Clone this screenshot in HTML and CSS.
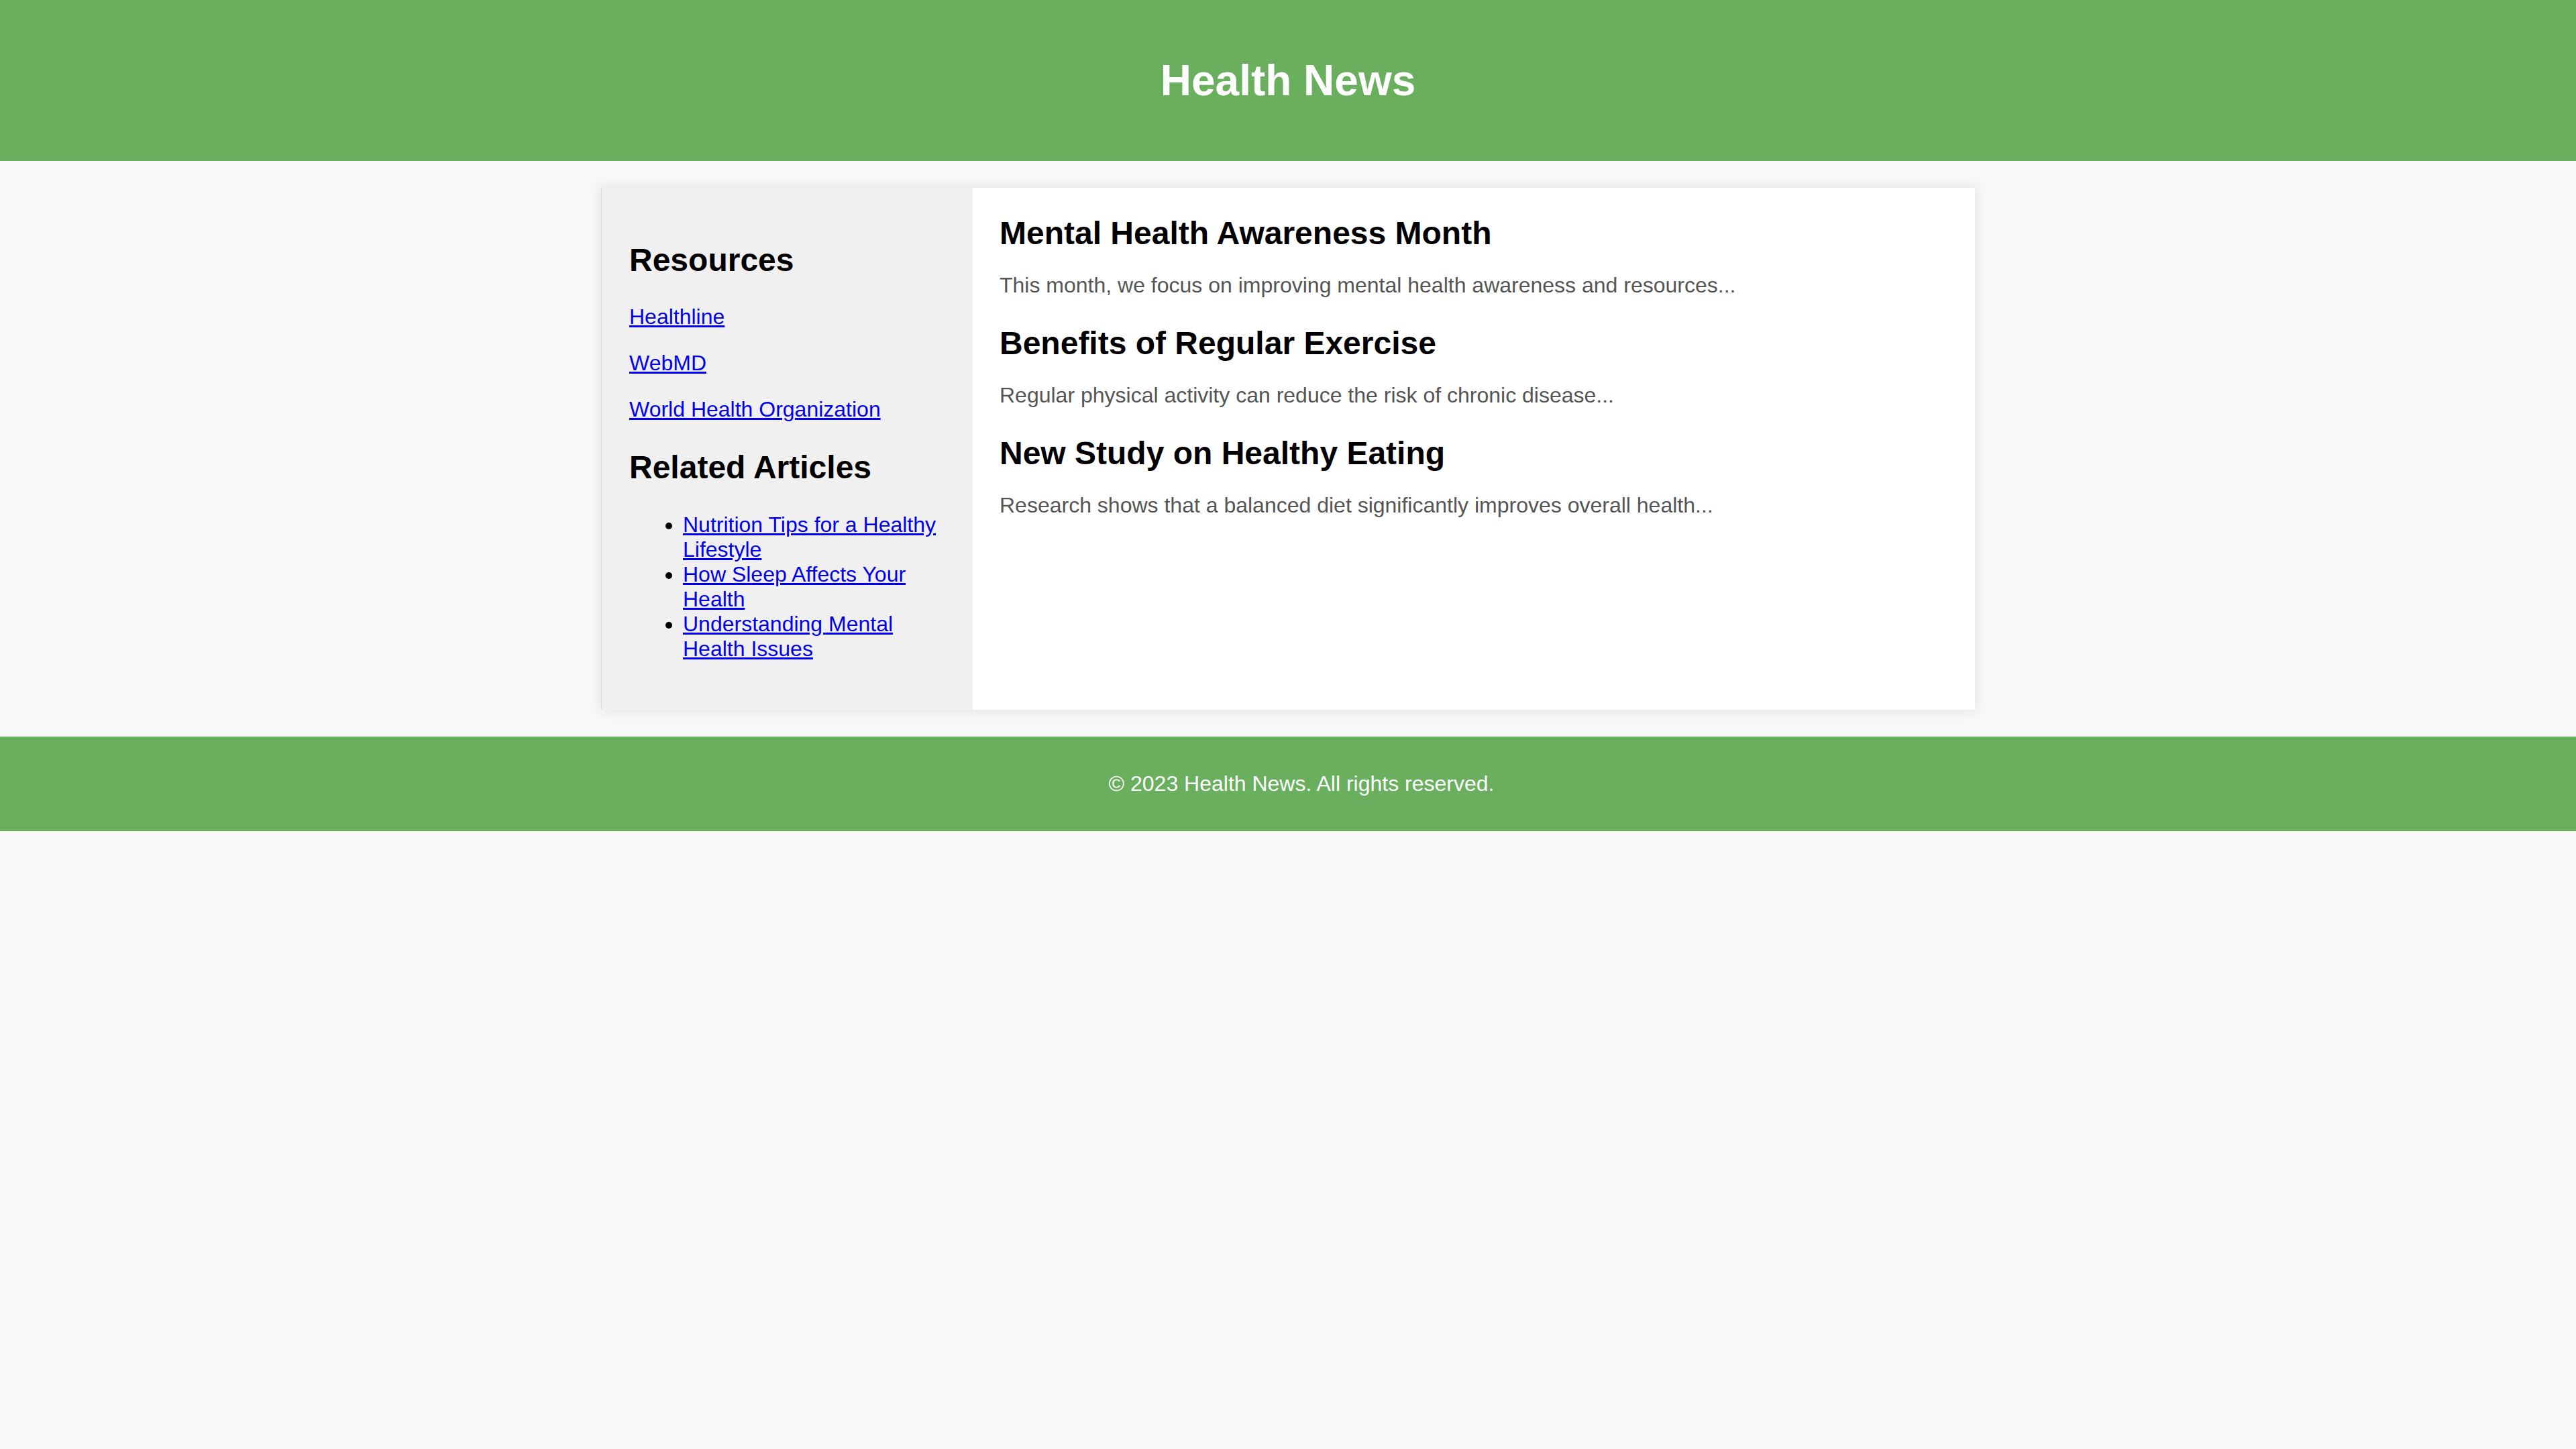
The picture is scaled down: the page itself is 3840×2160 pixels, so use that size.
FILE: index.html
```html
<!DOCTYPE html>
<html lang="en">
<head>
<meta charset="utf-8">
<title>Health News</title>
<link rel="stylesheet" href="styles.css">
</head>
<body>
<header class="site-header">
  <h1 class="site-title">Health News</h1>
</header>
<div class="container">
  <aside class="sidebar">
    <h2 class="side-heading">Resources</h2>
    <p class="side-link"><a href="#">Healthline</a></p>
    <p class="side-link"><a href="#">WebMD</a></p>
    <p class="side-link"><a href="#">World Health Organization</a></p>
    <h2 class="side-heading">Related Articles</h2>
    <ul class="related">
      <li><a href="#">Nutrition Tips for a Healthy Lifestyle</a></li>
      <li><a href="#">How Sleep Affects Your Health</a></li>
      <li><a href="#">Understanding Mental Health Issues</a></li>
    </ul>
  </aside>
  <main class="content">
    <article class="article">
      <h2 class="article-title">Mental Health Awareness Month</h2>
      <p class="article-text">This month, we focus on improving mental health awareness and resources...</p>
    </article>
    <article class="article">
      <h2 class="article-title">Benefits of Regular Exercise</h2>
      <p class="article-text">Regular physical activity can reduce the risk of chronic disease...</p>
    </article>
    <article class="article">
      <h2 class="article-title">New Study on Healthy Eating</h2>
      <p class="article-text">Research shows that a balanced diet significantly improves overall health...</p>
    </article>
  </main>
</div>
<footer class="site-footer">
  <p class="footer-text">&copy; 2023 Health News. All rights reserved.</p>
</footer>
</body>
</html>
```
FILE: styles.css
```css
html, body {
  margin: 0;
  padding: 0;
}
body {
  background: #f8f8f8;
  font-family: "Liberation Sans", Arial, sans-serif;
  font-size: 32px;
  color: #000;
}
.site-header {
  background: #69af5e;
  color: #fff;
  text-align: center;
  padding: 40px;
}
.site-title {
  font-size: 64px;
  font-weight: bold;
  margin: 42.88px 0;
  line-height: normal;
}
.container {
  width: 2048px;
  margin: 40px auto;
  display: flex;
  background: #fff;
  box-shadow: 0 0 20px rgba(0, 0, 0, 0.1);
}
.sidebar {
  box-sizing: border-box;
  width: 554px;
  flex: 0 0 554px;
  background: #f0f0f0;
  border-left: 1px solid #dddddd;
  padding: 40px 40px 40px 41px;
}
.side-heading {
  font-size: 48px;
  font-weight: bold;
  margin: 39.84px 0;
}
.side-link {
  margin: 32px 0;
}
.sidebar a,
.related a {
  color: #0000ee;
  text-decoration: underline;
}
.related {
  margin: 32px 0;
  padding-left: 80px;
}
.content {
  flex: 1;
  padding: 40px;
}
.article {
  margin-bottom: 40px;
}
.article-title {
  font-size: 48px;
  font-weight: bold;
  margin: 0 0 32px;
}
.article-text {
  color: #555;
  margin: 0;
}
.site-footer {
  background: #69af5e;
  color: #fff;
  text-align: center;
  padding: 20px 0 20px 40px;
}
.footer-text {
  margin: 32px 0;
}
```
